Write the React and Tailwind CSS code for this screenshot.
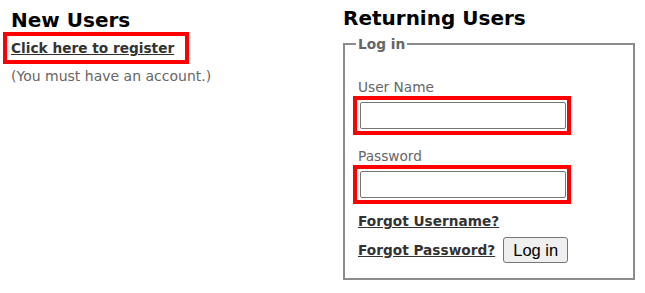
export default function App() {
  return (
    <div className="flex bg-white text-black font-['DejaVu_Sans','Verdana',sans-serif] w-[645px] h-[293px]">
      {/* new users */}
      <div className="w-[343px] pl-[3px] pt-[8px]">
        <h2 className="ml-[8px] text-[20px] leading-[24px] font-bold">New Users</h2>
        <div className="w-[186px] border-4 border-[#ff0000] pl-[4px] pt-[4px] pb-[3px]">
          <a href="#" className="block text-[13.7px] leading-[17px] font-bold text-[#333] underline">
            Click here to register
          </a>
        </div>
        <p className="ml-[8px] mt-[4px] text-[14px] leading-[17px] text-[#666]">(You must have an account.)</p>
      </div>

      {/* returning users */}
      <div className="pt-[6px]">
        <h2 className="text-[20px] leading-[24px] font-bold">Returning Users</h2>
        <fieldset className="mt-[6px] w-[292px] border-2 border-[#8c8c8c] pl-[8px] pb-[15px]">
          <legend className="ml-[3px] px-[2px] text-[13.7px] leading-[16px] font-bold text-[#666]">Log in</legend>

          <label className="block ml-[5px] mt-[27px] text-[13.7px] leading-[17px] text-[#666]">User Name</label>
          <div className="w-[218px] border-4 border-[#ff0000] pl-[3px] pr-px pt-[2px] pb-[2px]">
            <input type="text" className="block w-[206px] h-[27px] border border-[#767676] rounded-[2px] bg-white" />
          </div>

          <label className="block ml-[5px] mt-[13px] text-[13.7px] leading-[17px] text-[#666]">Password</label>
          <div className="w-[218px] border-4 border-[#ff0000] pl-[3px] pr-px pt-[2px] pb-[2px]">
            <input type="password" className="block w-[206px] h-[27px] border border-[#767676] rounded-[2px] bg-white" />
          </div>

          <a href="#" className="block ml-[5px] mt-[9px] text-[13.7px] leading-[17px] font-bold text-[#333] underline w-fit">
            Forgot Username?
          </a>
          <div className="flex items-center ml-[5px] mt-[7px]">
            <a href="#" className="text-[13.7px] leading-[17px] font-bold text-[#333] underline">
              Forgot Password?
            </a>
            <button className="ml-[8px] h-[26px] px-[9px] border border-[#767676] rounded-[3px] bg-[#efefef] text-[16.5px] leading-[20px] font-['Liberation_Sans',Arial,sans-serif] text-black">
              Log in
            </button>
          </div>
        </fieldset>
      </div>
    </div>
  )
}
